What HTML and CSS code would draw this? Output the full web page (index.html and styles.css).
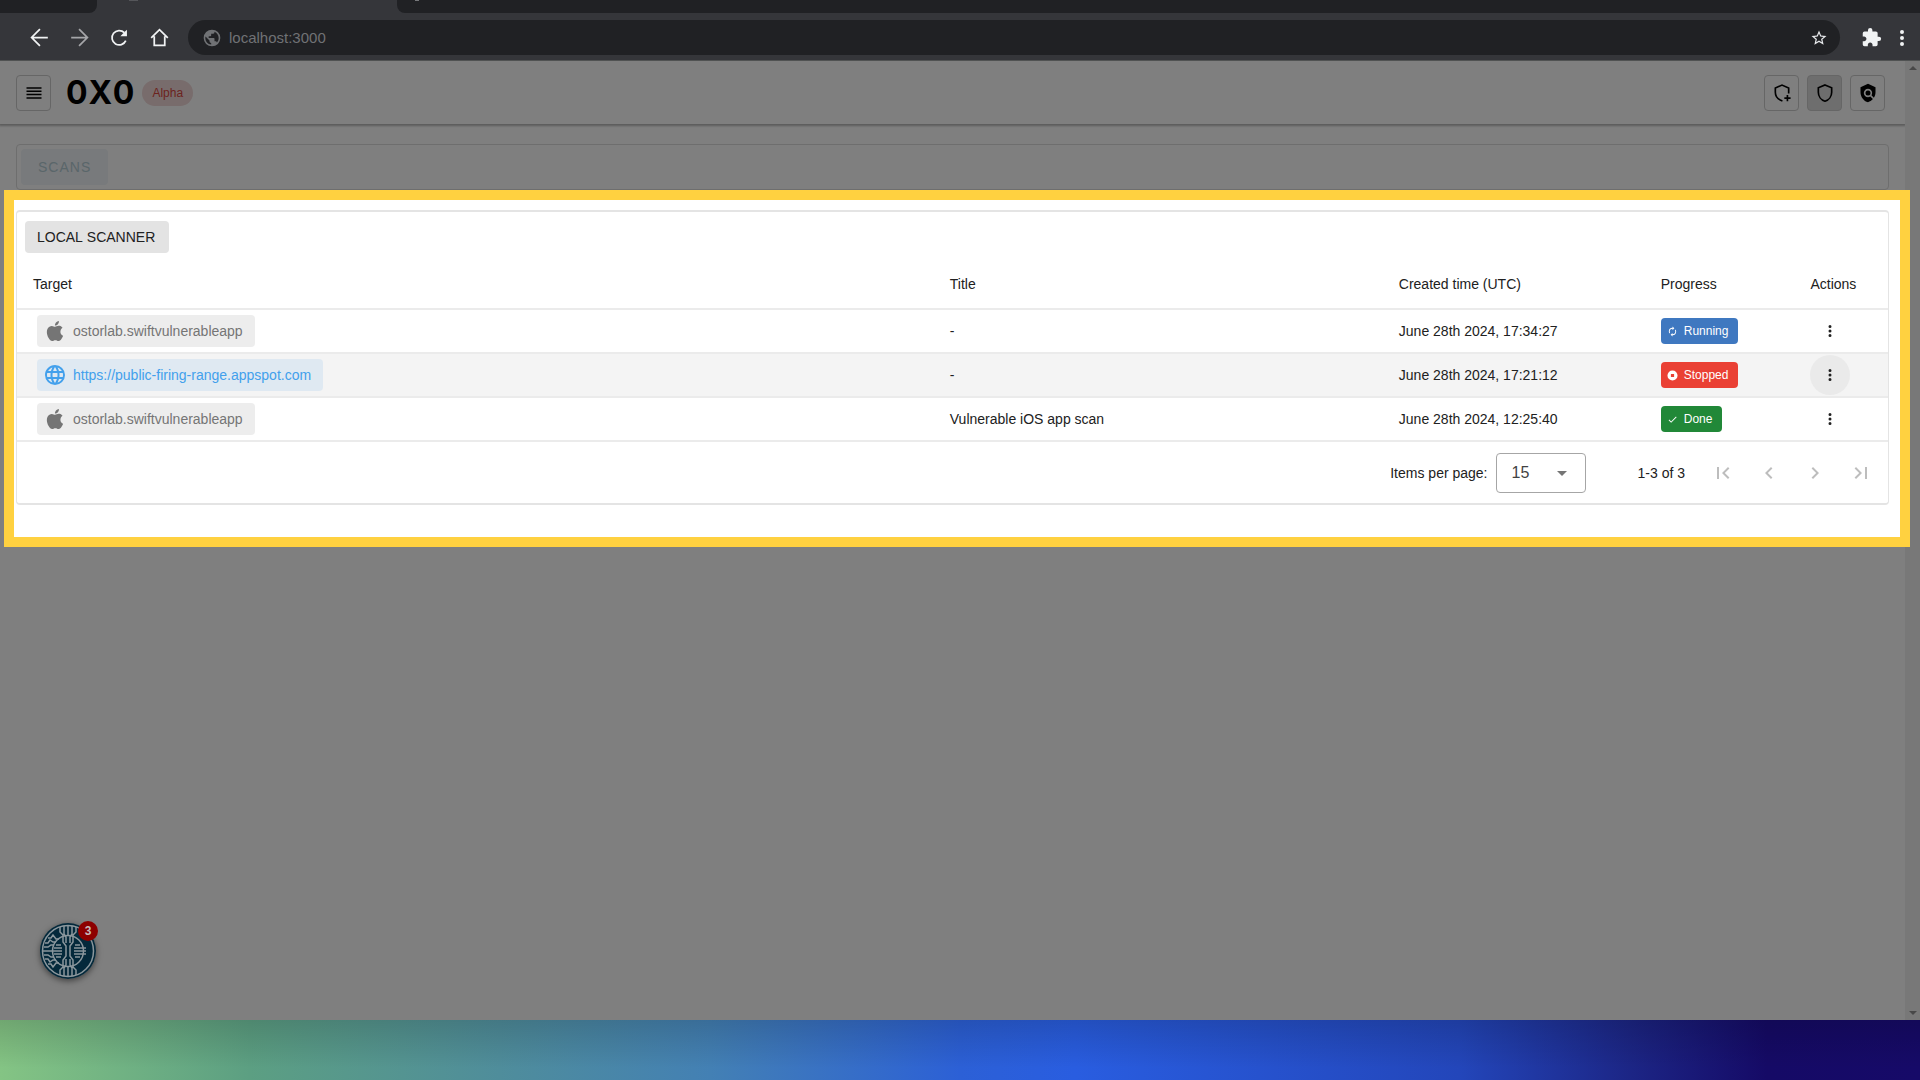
FILE: index.html
```html
<!DOCTYPE html>
<html lang="en">
<head>
<meta charset="utf-8">
<title>OXO Scans</title>
<link rel="stylesheet" href="styles.css">
</head>
<body>
<svg class="sprite" aria-hidden="true">
  <symbol id="apple" viewBox="0 0 24 24"><path d="M18.71 19.5C17.88 20.74 17 21.95 15.66 21.97C14.32 22 13.89 21.18 12.37 21.18C10.84 21.18 10.37 21.95 9.1 22C7.79 22.05 6.8 20.68 5.96 19.47C4.25 17 2.94 12.45 4.7 9.39C5.57 7.87 7.13 6.91 8.82 6.88C10.1 6.86 11.32 7.75 12.11 7.75C12.89 7.75 14.37 6.68 15.92 6.84C16.57 6.87 18.39 7.1 19.56 8.82C19.47 8.88 17.39 10.1 17.41 12.63C17.44 15.65 20.06 16.66 20.09 16.67C20.06 16.74 19.67 18.11 18.71 19.5M13 3.5C13.73 2.67 14.94 2.04 15.94 2C16.07 3.17 15.6 4.35 14.9 5.19C14.21 6.04 13.07 6.7 11.95 6.61C11.8 5.46 12.36 4.26 13 3.5Z"/></symbol>
  <symbol id="web" viewBox="0 0 24 24"><path d="M16.36,14C16.44,13.34 16.5,12.68 16.5,12C16.5,11.32 16.44,10.66 16.36,10H19.74C19.9,10.64 20,11.31 20,12C20,12.69 19.9,13.36 19.74,14M14.59,19.56C15.19,18.45 15.65,17.25 15.97,16H18.92C17.96,17.65 16.43,18.93 14.59,19.56M14.34,14H9.66C9.56,13.34 9.5,12.68 9.5,12C9.5,11.32 9.56,10.65 9.66,10H14.34C14.43,10.65 14.5,11.32 14.5,12C14.5,12.68 14.43,13.34 14.34,14M12,19.96C11.17,18.76 10.5,17.43 10.09,16H13.91C13.5,17.43 12.83,18.76 12,19.96M8,8H5.08C6.03,6.34 7.57,5.06 9.4,4.44C8.8,5.55 8.35,6.75 8,8M5.08,16H8C8.35,17.25 8.8,18.45 9.4,19.56C7.57,18.93 6.03,17.65 5.08,16M4.26,14C4.1,13.36 4,12.69 4,12C4,11.31 4.1,10.64 4.26,10H7.64C7.56,10.66 7.5,11.32 7.5,12C7.5,12.68 7.56,13.34 7.64,14M12,4.03C12.83,5.23 13.5,6.57 13.91,8H10.09C10.5,6.57 11.17,5.23 12,4.03M18.92,8H15.97C15.65,6.75 15.19,5.55 14.59,4.44C16.43,5.07 17.96,6.34 18.92,8M12,2C6.47,2 2,6.5 2,12A10,10 0 0,0 12,22A10,10 0 0,0 22,12A10,10 0 0,0 12,2Z"/></symbol>
  <symbol id="dots" viewBox="0 0 24 24"><path d="M12,16A2,2 0 0,1 14,18A2,2 0 0,1 12,20A2,2 0 0,1 10,18A2,2 0 0,1 12,16M12,10A2,2 0 0,1 14,12A2,2 0 0,1 12,14A2,2 0 0,1 10,12A2,2 0 0,1 12,10M12,4A2,2 0 0,1 14,6A2,2 0 0,1 12,8A2,2 0 0,1 10,6A2,2 0 0,1 12,4Z"/></symbol>
</svg>

<div class="tabs">
  <div class="tab tab-left"></div>
  <div class="tab-active"><span class="favicon"></span></div>
  <div class="tab tab-rest"><span class="favicon favicon-small"></span></div>
</div>
<nav class="toolbar" aria-label="Browser">
  <button class="nav-btn" aria-label="Back"><svg viewBox="0 0 24 24"><path class="line" d="M21.500 12H3.500M12.500 2.500L3 12L12.500 21.500"/></svg></button>
  <button class="nav-btn muted" aria-label="Forward"><svg viewBox="0 0 24 24"><path class="line" d="M2.500 12H20.500M11.500 2.500L21 12L11.500 21.500"/></svg></button>
  <button class="nav-btn" aria-label="Reload"><svg viewBox="0 0 24 24"><path class="line" d="M19.200 15.500A8.200 8.200 0 1 1 17.500 6.500"/><path d="M20.500 3V10.500H13L16 7.500L18 5.500Z"/></svg></button>
  <button class="nav-btn" aria-label="Home"><svg viewBox="0 0 24 24"><path class="line" d="M6 10.500V21H18V10.500M2.500 12.500L12 3L21.500 12.500"/></svg></button>
  <label class="url">
    <svg viewBox="0 0 24 24"><path d="M17.900,17.390C17.640,16.590 16.890,16 16,16H15V13A1,1 0 0,0 14,12H8V10H10A1,1 0 0,0 11,9V7H13A2,2 0 0,0 15,5V4.590C17.930,5.770 20,8.640 20,12C20,14.080 19.200,15.970 17.900,17.390M11,19.930C7.050,19.440 4,16.080 4,12C4,11.380 4.080,10.780 4.210,10.210L9,15V16A2,2 0 0,0 11,18M12,2A10,10 0 0,0 2,12A10,10 0 0,0 12,22A10,10 0 0,0 22,12A10,10 0 0,0 12,2Z"/></svg>
    <input type="text" value="localhost:3000" aria-label="Address">
    <svg class="star" viewBox="0 0 24 24"><path d="M12,15.390L8.240,17.660L9.230,13.380L5.910,10.500L10.290,10.130L12,6.090L13.710,10.130L18.090,10.500L14.770,13.380L15.760,17.660M22,9.240L14.810,8.630L12,2L9.190,8.630L2,9.240L7.450,13.970L5.820,21L12,17.270L18.180,21L16.540,13.970L22,9.240Z"/></svg>
  </label>
  <button class="nav-btn ext" aria-label="Extensions"><svg viewBox="0 0 24 24"><path d="M20.500,11H19V7C19,5.890 18.100,5 17,5H13V3.500A2.500,2.500 0 0,0 10.500,1A2.500,2.500 0 0,0 8,3.500V5H4A2,2 0 0,0 2,7V10.800H3.500C5,10.800 6.200,12 6.200,13.500C6.200,15 5,16.200 3.500,16.200H2V20A2,2 0 0,0 4,22H7.800V20.500C7.800,19 9,17.800 10.500,17.800C12,17.800 13.200,19 13.200,20.500V22H17A2,2 0 0,0 19,20V16H20.500A2.500,2.500 0 0,0 23,13.500A2.500,2.500 0 0,0 20.500,11Z"/></svg></button>
  <button class="nav-btn menu" aria-label="Browser menu"><svg viewBox="0 0 24 24"><use href="#dots"/></svg></button>
</nav>

<div class="app">
  <div class="page">
    <header class="app-bar">
      <button class="square" aria-label="Menu"><svg viewBox="0 0 24 24"><path d="M3 5H21V6.800H3ZM3 9H21V10.800H3ZM3 13H21V14.800H3ZM3 17H21V18.800H3Z"/></svg></button>
      <span class="logo">0X0</span>
      <span class="alpha">Alpha</span>
      <span class="grow"></span>
      <button class="square" aria-label="New scan"><svg viewBox="0 0 24 24"><path class="line" d="M12.500 21.500C7.500 19.800 4 16 4 11V6L12 2.500L20 6V12.500M18.500 14.500V22M14.800 18.200H22.300"/></svg></button>
      <button class="square active" aria-label="Scans"><svg viewBox="0 0 24 24"><path class="line" d="M12 2.300L20 5.800V11C20 16 16.700 20.500 12 21.900C7.300 20.500 4 16 4 11V5.800Z"/></svg></button>
      <button class="square" aria-label="Search findings"><svg viewBox="0 0 24 24"><path d="M21 5L12 1L3 5V11C3 16.550 6.840 21.740 12 23C14.300 22.440 16.330 21.100 17.880 19.290L14.760 16.170C12.810 17.460 10.150 17.250 8.430 15.530C6.480 13.580 6.480 10.410 8.430 8.460C10.380 6.510 13.550 6.510 15.500 8.460C17.220 10.180 17.430 12.830 16.140 14.790L19.070 17.720C20.300 15.740 21 13.410 21 11Z"/><circle cx="12" cy="12" r="3"/></svg></button>
    </header>

    <main>
      <section class="card scans"><button class="scans-btn">SCANS</button></section>
      <section class="card scanner">
        <div class="scanner-bar"><button class="scanner-btn">LOCAL SCANNER</button></div>
        <table>
          <colgroup><col class="c-target"><col class="c-title"><col class="c-time"><col class="c-progress"><col class="c-actions"></colgroup>
          <thead><tr><th>Target</th><th>Title</th><th>Created time (UTC)</th><th>Progress</th><th>Actions</th></tr></thead>
          <tbody>
            <tr>
              <td><span class="target"><svg><use href="#apple"/></svg>ostorlab.swiftvulnerableapp</span></td>
              <td>-</td><td>June 28th 2024, 17:34:27</td>
              <td><span class="status running"><svg viewBox="0 0 24 24"><path d="M12,6V9L16,5L12,1V4A8,8 0 0,0 4,12C4,13.570 4.460,15.030 5.240,16.260L6.700,14.800C6.250,13.970 6,13 6,12A6,6 0 0,1 12,6M18.760,7.740L17.300,9.200C17.740,10.040 18,11 18,12A6,6 0 0,1 12,18V15L8,19L12,23V20A8,8 0 0,0 20,12C20,10.430 19.540,8.970 18.760,7.740Z"/></svg>Running</span></td>
              <td><button class="round" aria-label="Actions"><svg><use href="#dots"/></svg></button></td>
            </tr>
            <tr class="hovered">
              <td><a class="target link" href="https://public-firing-range.appspot.com"><svg><use href="#web"/></svg>https://public-firing-range.appspot.com</a></td>
              <td>-</td><td>June 28th 2024, 17:21:12</td>
              <td><span class="status stopped"><svg viewBox="0 0 24 24"><path fill-rule="evenodd" d="M12 1A11 11 0 1 0 12 23A11 11 0 1 0 12 1ZM8.500 8.500H15.500V15.500H8.500Z"/></svg>Stopped</span></td>
              <td><button class="round" aria-label="Actions"><svg><use href="#dots"/></svg></button></td>
            </tr>
            <tr>
              <td><span class="target"><svg><use href="#apple"/></svg>ostorlab.swiftvulnerableapp</span></td>
              <td>Vulnerable iOS app scan</td><td>June 28th 2024, 12:25:40</td>
              <td><span class="status done"><svg viewBox="0 0 24 24"><path d="M21,7L9,19L3.500,13.500L4.910,12.090L9,16.170L19.590,5.590L21,7Z"/></svg>Done</span></td>
              <td><button class="round" aria-label="Actions"><svg><use href="#dots"/></svg></button></td>
            </tr>
          </tbody>
        </table>
        <footer class="pager">
          <label for="per-page">Items per page:</label>
          <span class="select"><select id="per-page"><option>15</option></select></span>
          <span class="range">1-3 of 3</span>
          <button class="page-btn" disabled aria-label="First page"><svg viewBox="0 0 24 24"><path d="M18.410,16.590L13.820,12L18.410,7.410L17,6L11,12L17,18L18.410,16.590M6,6H8V18H6V6Z"/></svg></button>
          <button class="page-btn" disabled aria-label="Previous page"><svg viewBox="0 0 24 24"><path d="M15.410,16.580L10.830,12L15.410,7.410L14,6L8,12L14,18L15.410,16.580Z"/></svg></button>
          <button class="page-btn" disabled aria-label="Next page"><svg viewBox="0 0 24 24"><path d="M8.590,16.580L13.170,12L8.590,7.410L10,6L16,12L10,18L8.590,16.580Z"/></svg></button>
          <button class="page-btn" disabled aria-label="Last page"><svg viewBox="0 0 24 24"><path d="M5.590,7.410L10.180,12L5.590,16.590L7,18L13,12L7,6L5.590,7.410M16,6H18V18H16V6Z"/></svg></button>
        </footer>
      </section>
    </main>
  </div>
  <div class="scrollbar"><span class="up"></span><span class="down"></span></div>

  <button class="widget" aria-label="Developer tools">
    <svg viewBox="0 0 56 56">
      <circle cx="28" cy="28" r="28" fill="#04293b"/>
      <g fill="none" stroke="#8b979d" stroke-width="1.500">
        <circle cx="28" cy="28" r="25.500"/>
        <circle cx="28" cy="28" r="15.500"/>
        <path d="M28 3V12M28 53V44M24 3V11L26 14V20M32 3V11L30 14V20M20 4V9L23 12V19L26 23V33L23 37V44L20 47V52M36 4V9L33 12V19L30 23V33L33 37V44L36 47V52M24 53V45L26 42V36M32 53V45L30 42V36"/>
        <path d="M14 25H22M13 28H22M14 31H22M16 22H21M16 34H21M34 25H46M34 28H46M34 31H46M35 22H40M35 34H40"/>
        <path d="M2 28H13M4 24H8L11 22H14M5 20H8L10 17L13 19H16M8 15H11L13 12L16 16H19M4 32H8L11 34H14M5 36H8L10 39L13 37H16M8 41H11L13 44L16 40H19"/>
      </g>
    </svg>
    <span class="badge">3</span>
  </button>
</div>
<div class="wallpaper"></div>
</body>
</html>
```
FILE: styles.css
```css
* { box-sizing: border-box; }
html { height: 100%; }
body {
  margin: 0;
  min-height: 100%;
  display: flex;
  flex-direction: column;
  font: 14px/20px "Liberation Sans", Arial, sans-serif;
  color: #212121;
  background: #808080;
}
button, input, select { font: inherit; color: inherit; margin: 0; }
button { padding: 0; border: 0; background: none; display: flex; align-items: center; justify-content: center; }
svg { fill: currentColor; flex: none; display: block; }
.line { fill: none; stroke: currentColor; stroke-width: 2; }
.sprite { position: absolute; width: 0; height: 0; }

/* Browser chrome */
.tabs, .toolbar { position: relative; z-index: 2; background: #35363a; display: flex; }
.tabs { height: 13px; }
.tab { background: #202124; }
.tab-left { width: 97px; border-bottom-right-radius: 8px; }
.tab-active { width: 300px; padding-left: 32px; }
.tab-rest { flex: 1; border-bottom-left-radius: 8px; padding-left: 18px; }
.favicon { display: block; width: 9px; height: 1px; background: #55565a; }
.favicon-small { width: 4px; background: #77787b; }
.toolbar { height: 48px; align-items: center; padding: 2px 5px 0 19px; border-bottom: 1px solid #505252; color: #f1f3f4; }
.nav-btn { width: 40px; height: 36px; }
.nav-btn svg { width: 21px; height: 21px; }
.muted { color: #a5a6a9; }
.ext { width: 36px; margin-left: 13px; }
.nav-btn.menu { width: 26px; }
.menu svg { width: 24px; height: 24px; }
.url { flex: 1; display: flex; align-items: center; gap: 7px; height: 35px; margin-left: 9px; padding: 0 12px 0 14px; border-radius: 18px; background: #202124; color: #707275; }
.url svg { width: 20px; height: 20px; }
.url input { flex: 1; min-width: 0; border: 0; padding: 0; background: none; font-size: 15px; outline: 0; }
.url .star { width: 18px; height: 18px; color: #e8eaed; }

/* Application */
.app { flex: 1; position: relative; display: flex; overflow: hidden; background: #fff; }
.page { flex: 1; min-width: 0; }
.app-bar { display: flex; align-items: center; height: 63px; padding: 0 20px 0 16px; box-shadow: 0 1px 2px 1px #b8b8b8; }
.square { width: 35px; height: 36px; border: 1px solid #ccc; border-radius: 4px; color: #000; }
.square + .square { margin-left: 8px; }
.square svg { width: 20px; height: 20px; }
.square.active { background: #dcdcdc; }
.logo { margin-left: 15px; font: 700 32px/36px Inter, sans-serif; letter-spacing: 2px; color: #000; }
.alpha { margin-left: 6px; padding: 0 10px; border-radius: 13px; font-size: 12px; line-height: 26px; background: #f0d8d8; color: #d9473f; }
.grow { flex: 1; }

main { padding: 20px 16px; }
.card { border: 1px solid #dcdcdc; border-radius: 4px; background: #fff; }
.scans { padding: 4px; margin-bottom: 20px; }
.scans-btn { height: 36px; padding: 0 17px; border-radius: 4px; letter-spacing: 1px; background: #f0f4f8; color: #b4ccd4; }
.scanner { position: relative; border-top-width: 2px; border-bottom-width: 2px; border-color: #e4e4e4; }
/* Spotlight frame: dims everything outside the highlighted card */
.scanner::after {
  content: "";
  position: absolute;
  inset: -22px -22px -44px -13px;
  border: 10px solid #ffd140;
  box-shadow: 0 0 0 9999px rgba(0, 0, 0, .5);
  pointer-events: none;
  z-index: 1;
}
.scanner-bar { padding: 9px 8px 7px; }
.scanner-btn { height: 32px; padding: 0 14px 0 12px; border-radius: 4px; background: #e3e3e3; font-kerning: none; }

table { width: 100%; table-layout: fixed; border-collapse: collapse; }
.c-target { width: 49%; }
.c-title { width: 24%; }
.c-time { width: 14%; }
.c-progress { width: 8%; }
.c-actions { width: 5%; }
th, td { padding: 0 16px; text-align: left; font-weight: 400; border-bottom: 2px solid #ebebeb; white-space: nowrap; }
th { height: 49px; }
td { height: 44px; }
.hovered { background: #f4f4f4; }
.target { display: inline-flex; align-items: center; gap: 6px; height: 32px; margin-left: 4px; padding: 0 12px 0 6px; border-radius: 4px; background: #ededed; color: #757575; vertical-align: middle; text-decoration: none; }
.target svg { width: 24px; height: 24px; }
.target.link { background: #dfe9f2; color: #42a0ec; }
.status { display: inline-flex; align-items: center; gap: 6px; height: 26px; padding: 0 10px 0 6px; border-radius: 4px; font-size: 12px; color: #fff; vertical-align: middle; }
.status svg { width: 11px; height: 11px; }
.running { background: #3f78c0; }
.stopped { background: #ea4034; }
.done { background: #218838; }
.round { width: 40px; height: 40px; border-radius: 50%; }
.round svg { width: 18px; height: 18px; }
.hovered .round { background: #eaeaea; }

.pager { display: flex; align-items: center; justify-content: flex-end; height: 61px; padding-right: 7px; }
.select { position: relative; margin: 0 52px 0 8px; }
.select::after { content: ""; position: absolute; right: 19px; top: 18px; border: 5px solid transparent; border-top-color: #757575; border-bottom: 0; }
.select select { appearance: none; width: 90px; height: 40px; padding: 0 15px; border: 1px solid #a6a6a6; border-radius: 4px; background: #fff; font-size: 16px; color: #424242; display: block; }
.range { margin-right: 18px; }
.page-btn { width: 40px; height: 40px; color: #bdbdbd; }
.page-btn + .page-btn { margin-left: 6px; }
.page-btn svg { width: 24px; height: 24px; }

.scrollbar { width: 15px; background: #f1f1f1; display: flex; flex-direction: column; justify-content: space-between; align-items: center; padding: 5px 0; }
.up, .down { border: 4px solid transparent; }
.up { border-bottom-color: #909090; border-top: 0; }
.down { border-top-color: #909090; border-bottom: 0; }

.widget { position: absolute; left: 40px; bottom: 41px; z-index: 2; width: 56px; height: 56px; border-radius: 50%; box-shadow: 0 2px 6px rgba(0, 0, 0, .5); }
.widget svg { width: 56px; height: 56px; }
.badge { position: absolute; top: -2px; right: -2px; width: 20px; height: 20px; border-radius: 50%; background: #8d0000; color: #c6bcbc; font: 700 12px/20px "Liberation Sans", Arial, sans-serif; }

.wallpaper {
  height: 60px;
  background:
    linear-gradient(rgba(0, 0, 0, .15), transparent 80%),
    linear-gradient(90deg, #84c484 0, #5c9f82 13%, #4f8d9b 26%, #4380b4 37%, #2c60d6 50%, #295de0 56%, #2346ba 76%, #1c2585 85%, #150a66 92%, #160a68 100%);
}
```
